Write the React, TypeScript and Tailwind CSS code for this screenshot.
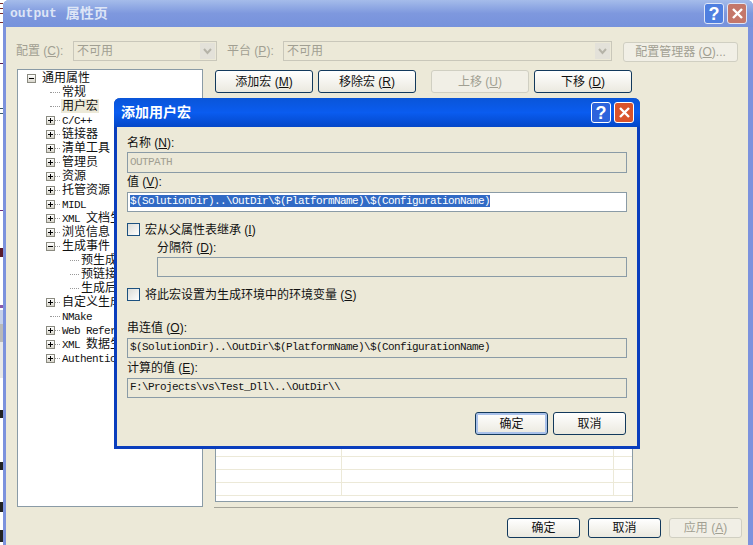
const sans = '"Liberation Sans", "Noto Sans CJK SC", sans-serif'
const mono = '"Liberation Mono", "Noto Sans CJK SC", monospace'

const TitleButtons = ({ faded }: { faded?: boolean }) => (
  <div className="flex gap-[3px]">
    <div
      className={`flex h-[21px] w-[20px] items-center justify-center rounded-[3px] border text-[18px] font-bold leading-none text-white ${
        faded ? 'border-[#dfe6f7] bg-[#4f7fe0]' : 'border-white bg-[#2d63dc]'
      }`}
    >
      ?
    </div>
    <div
      className={`flex h-[21px] w-[20px] items-center justify-center rounded-[3px] border ${
        faded ? 'border-[#dfe6f7] bg-[#c4776a]' : 'border-white bg-[#d9532c]'
      }`}
    >
      <svg width="13" height="13" viewBox="0 0 13 13">
        <path d="M2 2 L11 11 M11 2 L2 11" stroke="#fff" strokeWidth="2.4" />
      </svg>
    </div>
  </div>
)

const Button = ({
  children,
  disabled,
  primary,
  className,
}: {
  children: React.ReactNode
  disabled?: boolean
  primary?: boolean
  className?: string
}) => (
  <div
    className={`flex items-center justify-center rounded-[3px] border text-[12px] ${
      disabled
        ? 'border-[#d0cfc2] bg-[#f1efe6] text-[#a19f92]'
        : 'border-[#12395c] bg-gradient-to-b from-white to-[#ebe9df] text-[#111]'
    } ${primary ? 'shadow-[inset_0_0_0_2px_#a9c1ea]' : ''} ${className ?? ''}`}
  >
    {children}
  </div>
)

const Mn = ({ k }: { k: string }) => (
  <>
    {' ('}
    <span className="underline">{k}</span>)
  </>
)

const Combo = ({ width }: { width: string }) => (
  <div className={`flex h-[20px] items-center justify-between border border-[#c9c7ba] pl-[3px] pr-px text-[12px] text-[#a19f92] ${width}`}>
    <span>不可用</span>
    <div className="flex h-[16px] w-[15px] items-center justify-center bg-[#e3e1d9]">
      <svg width="9" height="7" viewBox="0 0 9 7">
        <path d="M1 1 L4.5 5 L8 1" fill="none" stroke="#b5b3a8" strokeWidth="2" />
      </svg>
    </div>
  </div>
)

const Expander = ({ open }: { open?: boolean }) => (
  <div className="relative flex h-[9px] w-[9px] shrink-0 items-center justify-center border border-[#8a8a80] bg-gradient-to-b from-white to-[#d8d6cc]">
    <div className="h-px w-[5px] bg-black" />
    {!open && <div className="absolute h-[5px] w-px bg-black" />}
  </div>
)

type Node = { label?: string; latin?: string; kind: 'plus' | 'minus' | 'leaf'; depth?: number; selected?: boolean }

const tree: Node[] = [
  { label: '常规', kind: 'leaf' },
  { label: '用户宏', kind: 'leaf', selected: true },
  { latin: 'C/C++', kind: 'plus' },
  { label: '链接器', kind: 'plus' },
  { label: '清单工具', kind: 'plus' },
  { label: '管理员', kind: 'plus' },
  { label: '资源', kind: 'plus' },
  { label: '托管资源', kind: 'plus' },
  { latin: 'MIDL', kind: 'plus' },
  { latin: 'XML', label: '文档生成器', kind: 'plus' },
  { label: '浏览信息', kind: 'plus' },
  { label: '生成事件', kind: 'minus' },
  { label: '预生成事件', kind: 'leaf', depth: 1 },
  { label: '预链接事件', kind: 'leaf', depth: 1 },
  { label: '生成后事件', kind: 'leaf', depth: 1 },
  { label: '自定义生成步骤', kind: 'plus' },
  { latin: 'NMake', kind: 'leaf' },
  { latin: 'Web References', kind: 'plus' },
  { latin: 'XML', label: '数据生成器', kind: 'plus' },
  { latin: 'Authentication', kind: 'plus' },
]

const TreeRow = ({ node }: { node: Node }) => (
  <div className={`flex h-[14px] w-[96px] items-center overflow-hidden whitespace-nowrap ${node.depth ? 'pl-[52px]' : 'pl-[28px]'}`}>
    {node.kind === 'leaf' ? (
      <div className={`mr-px shrink-0 border-t border-dotted border-[#999] ${node.depth ? 'w-[9px]' : 'ml-[4px] w-[10px]'}`} />
    ) : (
      <>
        <Expander open={node.kind === 'minus'} />
        <div className="mr-px w-[5px] shrink-0 border-t border-dotted border-[#999]" />
      </>
    )}
    <span className={`px-px text-[12px] leading-[14px] text-[#111] ${node.selected ? 'bg-[#ece9d8]' : ''}`}>
      {node.latin && (
        <span className="text-[11px] tracking-[-0.6px]" style={{ fontFamily: mono }}>
          {node.latin}
        </span>
      )}
      {node.latin && node.label && <span className="inline-block w-[6px]" />}
      {node.label}
    </span>
  </div>
)

const Field = ({
  children,
  white,
  className,
}: {
  children?: React.ReactNode
  white?: boolean
  className?: string
}) => (
  <div
    className={`flex items-center overflow-hidden whitespace-nowrap border border-[#8a9ba6] pb-[2px] pl-[2px] text-[11px] leading-[12px] tracking-[-0.6px] ${white ? 'bg-white' : ''} ${className ?? ''}`}
    style={{ fontFamily: mono }}
  >
    {children}
  </div>
)

const Check = () => <div className="h-[13px] w-[13px] shrink-0 border border-[#1c5180] bg-gradient-to-br from-[#dcdcd7] to-white" />

const Label = ({ className, children }: { className?: string; children: React.ReactNode }) => (
  <div className={`h-[14px] leading-[14px] ${className ?? ''}`}>{children}</div>
)

const Row = () => (
  <div className="flex h-[13px] border-b border-[#ece9d8]">
    <div className="w-[126px] border-r border-[#ece9d8]" />
    <div className="flex-1 border-r border-[#ece9d8]" />
    <div className="w-[18px]" />
  </div>
)

// clipped bits of whatever window sits behind, on the left edge
const marks = [
  { top: 3, h: 1, c: '#7a2a2a' },
  { top: 8, h: 1, c: '#7a2a2a' },
  { top: 13, h: 1, c: '#7a2a2a' },
  { top: 22, h: 1, c: '#7a2a2a' },
  { top: 63, h: 1, c: '#5a1a4a' },
  { top: 108, h: 1, c: '#3a5a6a' },
  { top: 113, h: 1, c: '#3a5a6a' },
  { top: 210, h: 1, c: '#6a2a7a' },
  { top: 248, h: 9, c: '#5a1a2a' },
  { top: 305, h: 3, c: '#8a5aaa' },
  { top: 410, h: 8, c: '#222' },
  { top: 462, h: 8, c: '#222' },
  { top: 502, h: 10, c: '#222' },
  { top: 530, h: 12, c: '#222' },
]

export default function App() {
  return (
    <div className="relative h-[545px] w-[753px] overflow-hidden bg-white text-[12px]" style={{ fontFamily: sans }}>
      {/* desktop peeking out on the left */}
      <div className="absolute left-0 top-[310px] h-[14px] w-[3px] bg-[#c5d0ea]" />
      <div className="absolute left-0 top-[324px] h-[18px] w-[3px] bg-[#b9b9b9]" />
      <div className="absolute left-0 top-[342px] h-[36px] w-[3px] bg-[#e8e8e8]" />
      {marks.map((m) => (
        <div key={m.top} className="absolute left-0 w-[3px]" style={{ top: m.top, height: m.h, backgroundColor: m.c }} />
      ))}

      {/* property page */}
      <div className="absolute inset-y-0 left-[3px] right-0 flex flex-col rounded-t-[6px] border-l-[3px] border-r-[5px] border-[#7c92dd] bg-[#ece9d8]">
        <div className="-ml-[3px] -mr-[5px] flex h-[27px] shrink-0 items-center justify-between rounded-t-[6px] bg-gradient-to-b from-[#a5bcea] via-[#7e98de] to-[#7692dc] pl-[7px] pr-[6px]">
          <span className="flex items-center font-bold text-[#dde5f6]">
            <span className="text-[13px]" style={{ fontFamily: mono }}>
              output
            </span>
            <span className="ml-[9px] text-[14px]">属性页</span>
          </span>
          <TitleButtons faded />
        </div>

        <div className="flex flex-1 flex-col pl-[11px]">
          <div className="-ml-px mt-[14px] flex items-start text-[#a19f92]">
            <span className="h-[20px] w-[57px] leading-[20px]">
              配置<Mn k="C" />:
            </span>
            <Combo width="w-[144px]" />
            <span className="ml-[10px] h-[20px] w-[56px] leading-[20px]">
              平台<Mn k="P" />:
            </span>
            <Combo width="w-[329px]" />
            <Button disabled className="ml-[11px] mt-px h-[20px] w-[115px]">
              配置管理器<Mn k="O" />...
            </Button>
          </div>

          <div className="mt-[7px] flex flex-1">
            <div className="mb-[38px] w-[186px] border border-[#8a9ba6] bg-white pt-px">
              <div className="flex h-[14px] items-center whitespace-nowrap pl-[9px]">
                <Expander open />
                <span className="ml-[6px] leading-[14px] text-[#111]">通用属性</span>
              </div>
              {tree.map((node) => (
                <TreeRow key={`${node.latin}${node.label}`} node={node} />
              ))}
            </div>

            <div className="ml-[12px] mt-px flex flex-1 flex-col">
              <div className="flex">
                <Button className="h-[23px] w-[98px]">
                  添加宏<Mn k="M" />
                </Button>
                <Button className="ml-[5px] h-[23px] w-[98px]">
                  移除宏<Mn k="R" />
                </Button>
                <Button disabled className="ml-[15px] h-[23px] w-[98px]">
                  上移<Mn k="U" />
                </Button>
                <Button className="ml-[5px] h-[23px] w-[98px]">
                  下移<Mn k="D" />
                </Button>
              </div>
              <div className="mt-[5px] flex w-[418px] flex-1 flex-col justify-end border border-[#8a9ba6] bg-white">
                <Row />
                <Row />
                <Row />
                <Row />
                <div className="h-[5px]" />
              </div>
              <div className="-ml-px mr-[10px] mt-[5px] h-px bg-[#a5a499]" />
              <div className="mb-[7px] mr-[6px] mt-[10px] flex justify-end gap-[8px]">
                <Button className="h-[20px] w-[73px]">确定</Button>
                <Button className="h-[20px] w-[73px]">取消</Button>
                <Button disabled className="h-[20px] w-[73px]">
                  应用<Mn k="A" />
                </Button>
              </div>
            </div>
          </div>
        </div>
      </div>

      {/* add user macro dialog */}
      <div className="absolute left-[114px] top-[98px] flex h-[351px] w-[526px] flex-col rounded-t-[6px] border-x-[3px] border-b-[3px] border-[#0a3ebd] bg-[#ece9d8]">
        <div className="-mx-[3px] flex h-[29px] shrink-0 items-center justify-between rounded-t-[6px] bg-gradient-to-b from-[#0a55d8] via-[#0a5cf0] to-[#0447c8] pl-[7px] pr-[6px]">
          <span className="text-[14px] font-bold text-white">添加用户宏</span>
          <TitleButtons />
        </div>

        <div className="flex flex-1 flex-col px-[10px] text-[#111]">
          <Label className="mt-[9px]">
            名称<Mn k="N" />:
          </Label>
          <Field className="mt-[2px] h-[21px] text-[#a19f92]">OUTPATH</Field>
          <Label className="mt-[2px]">
            值<Mn k="V" />:
          </Label>
          <Field white className="mt-[3px] h-[20px]">
            <span className="bg-[#316ac5] text-white">$(SolutionDir)..\OutDir\$(PlatformName)\$(ConfigurationName)</span>
          </Field>

          <div className="mt-[11px] flex h-[13px] items-center gap-[5px]">
            <Check />
            <span>
              宏从父属性表继承<Mn k="I" />
            </span>
          </div>
          <Label className="ml-[30px] mt-[5px]">
            分隔符<Mn k="D" />:
          </Label>
          <Field className="ml-[30px] mt-[2px] h-[20px]" />

          <div className="mt-[11px] flex h-[13px] items-center gap-[5px]">
            <Check />
            <span>
              将此宏设置为生成环境中的环境变量<Mn k="S" />
            </span>
          </div>

          <Label className="mt-[20px]">
            串连值<Mn k="O" />:
          </Label>
          <Field className="mt-[3px] h-[20px]">$(SolutionDir)..\OutDir\$(PlatformName)\$(ConfigurationName)</Field>
          <Label className="mt-[3px]">
            计算的值<Mn k="E" />:
          </Label>
          <Field className="mt-[3px] h-[20px]">F:\Projects\vs\Test_Dll\..\OutDir\\</Field>

          <div className="mr-px mt-[14px] flex justify-end gap-[5px]">
            <Button primary className="h-[23px] w-[73px]">
              确定
            </Button>
            <Button className="h-[23px] w-[73px]">取消</Button>
          </div>
        </div>
      </div>
    </div>
  )
}
